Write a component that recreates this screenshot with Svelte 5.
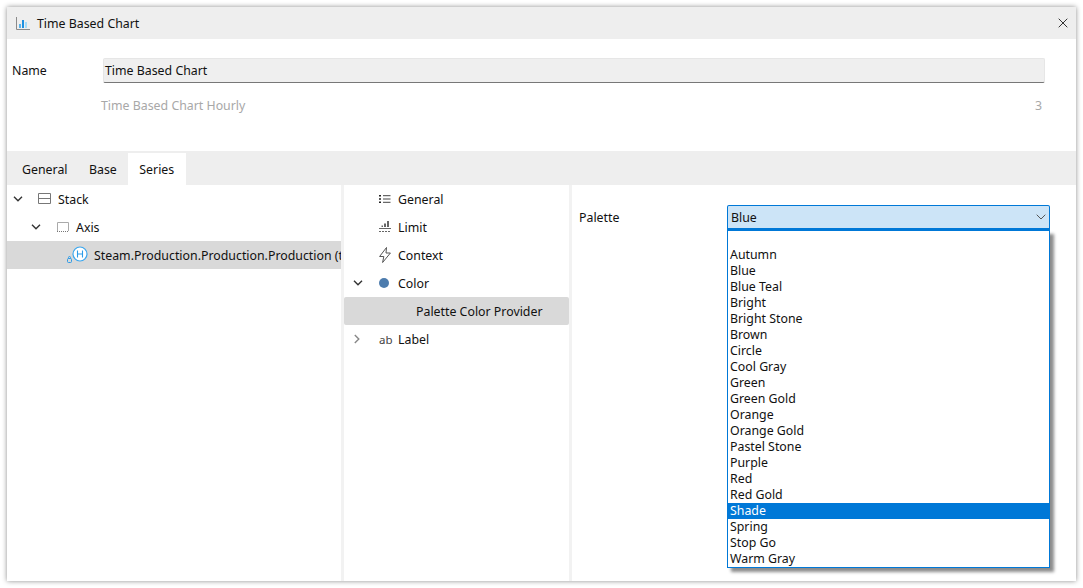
<script lang="ts">
  const palettes = ['Autumn', 'Blue', 'Blue Teal', 'Bright', 'Bright Stone', 'Brown', 'Circle', 'Cool Gray', 'Green', 'Green Gold', 'Orange', 'Orange Gold', 'Pastel Stone', 'Purple', 'Red', 'Red Gold', 'Shade', 'Spring', 'Stop Go', 'Warm Gray']
  const highlighted = 'Shade'
</script>

<div class="window">
  <header class="titlebar">
    <svg class="chart-icon" width="14" height="14" viewBox="0 0 14 14">
      <path d="M.5 1v12.5H14" fill="none" stroke="#8a8a8a" />
      <rect x="3" y="8" width="2" height="4" fill="#5ab4ea" />
      <rect x="6" y="4" width="2" height="8" fill="#1e90e0" />
      <rect x="9" y="6" width="2" height="6" fill="#a6dcf8" />
    </svg>
    <span class="title">Time Based Chart</span>
    <svg class="close" width="10" height="10" viewBox="0 0 10 10">
      <path d="M.7.7l8.6 8.6M9.3.7L.7 9.3" stroke="#333" fill="none" />
    </svg>
  </header>

  <section class="meta">
    <div class="name-row">
      <span class="name-label">Name</span>
      <div class="name-input">Time Based Chart</div>
    </div>
    <div class="hint-row">
      <span>Time Based Chart Hourly</span>
      <span>3</span>
    </div>
  </section>

  <nav class="tabs">
    <div class="tab">General</div>
    <div class="tab">Base</div>
    <div class="tab active">Series</div>
  </nav>

  <div class="panels">
    <div class="tree">
      <div class="row">
        <svg class="chev" width="10" height="6" viewBox="0 0 10 6"><path d="M1 .8l4 4 4-4" fill="none" stroke="#333" stroke-width="1.4" /></svg>
        <svg class="stack-icon" width="14" height="12" viewBox="0 0 14 12"><path d="M.5.5h12v10H.5zM.5 5.5h12" fill="none" stroke="#777" /></svg>
        <span>Stack</span>
      </div>
      <div class="row axis">
        <svg class="chev" width="10" height="6" viewBox="0 0 10 6"><path d="M1 .8l4 4 4-4" fill="none" stroke="#333" stroke-width="1.4" /></svg>
        <svg class="axis-icon" width="12" height="10" viewBox="0 0 12 10"><path d="M.5 9V.5h11V9" fill="none" stroke="#aaa" /><path d="M0 9.500h12" fill="none" stroke="#777" stroke-dasharray="1 1" /></svg>
        <span>Axis</span>
      </div>
      <div class="row selected series">
        <svg width="26" height="18" viewBox="0 0 26 18">
          <rect x="1.500" y="12.500" width="4" height="4" rx="1" fill="none" stroke="#2c9be8" />
          <path d="M2.500 12.500v-1a1 1 0 0 1 2 0v1" fill="none" stroke="#2c9be8" />
          <circle cx="14" cy="8" r="7" fill="#fff" stroke="#3aa6ee" stroke-width="1.2" />
          <path d="M11.500 4.500v7M16.500 4.500v7M11.500 8h5" fill="none" stroke="#2c9be8" stroke-width="1.100" />
        </svg>
        <span class="clip">Steam.Production.Production.Production (t</span>
      </div>
    </div>

    <div class="props">
      <div class="row">
        <span class="slot"></span>
        <svg class="prop-icon" width="12" height="10" viewBox="0 0 12 10"><path d="M0 1h2v1.500H0zM0 4.300h2v1.500H0zM0 7.500h2V9H0z" fill="#222" /><path d="M4 1.700h7.500M4 5h7.500M4 8.300h7.500" stroke="#444" fill="none" /></svg>
        <span>General</span>
      </div>
      <div class="row">
        <span class="slot"></span>
        <svg class="prop-icon" width="12" height="12" viewBox="0 0 12 12"><path d="M8 0h2v6H8zM5 2.500h2V6H5zM2.500 4.500h1.500V6H2.500z" fill="#666" /><path d="M0 7.500h12" stroke="#666" fill="none" /><path d="M0 10.500h12" stroke="#666" stroke-dasharray="2 1" fill="none" /></svg>
        <span>Limit</span>
      </div>
      <div class="row">
        <span class="slot"></span>
        <svg class="prop-icon" width="12" height="16" viewBox="0 0 12 16"><path d="M7.500.5L.6 9.500h4.200L3.600 15.500l7.800-9.500H7z" fill="none" stroke="#555" stroke-linejoin="round" /></svg>
        <span>Context</span>
      </div>
      <div class="row">
        <svg class="chev color-chev" width="10" height="6" viewBox="0 0 10 6"><path d="M1 .8l4 4 4-4" fill="none" stroke="#333" stroke-width="1.4" /></svg>
        <span class="dot"></span>
        <span>Color</span>
      </div>
      <div class="row selected provider">Palette Color Provider</div>
      <div class="row">
        <svg class="chev side" width="6" height="10" viewBox="0 0 6 10"><path d="M.8 1l4 4-4 4" fill="none" stroke="#888" stroke-width="1.4" /></svg>
        <span class="ab">ab</span>
        <span>Label</span>
      </div>
    </div>

    <div class="editor">
      <span class="palette-label">Palette</span>
      <div class="combo-wrap">
        <div class="combo">
          <span>Blue</span>
          <svg width="10" height="6" viewBox="0 0 10 6"><path d="M.7.7L5 5 9.300.7" fill="none" stroke="#555" /></svg>
        </div>
        <ul class="dropdown">
          <li class="blank"></li>
          {#each palettes as p}
            <li class:hl={p === highlighted}>{p}</li>
          {/each}
        </ul>
      </div>
    </div>
  </div>
</div>

<style>
  :global(body) {
    margin: 0;
    background: #fff;
    font-family: "Noto Sans", "Open Sans", sans-serif;
    font-size: 12.35px;
    color: #111;
  }
  .window {
    width: 1069px;
    height: 574px;
    margin: 7px;
    display: flex;
    flex-direction: column;
    background: #fff;
    box-shadow: 0 0 5px rgba(0, 0, 0, 0.45);
  }
  .titlebar {
    flex: 0 0 32px;
    display: flex;
    align-items: center;
    padding: 0 8px 0 9px;
    background: #eee;
  }
  .title { margin-left: 7px; flex: 1; }
  .meta { flex: 0 0 112px; padding: 19px 31px 0 5px; box-sizing: border-box; }
  .name-row { display: flex; align-items: center; }
  .name-label { width: 91px; }
  .name-input {
    flex: 1;
    height: 25px;
    padding-left: 1px;
    line-height: 24px;
    box-sizing: border-box;
    background: #efefef;
    border: 1px solid #e6e6e6;
    border-bottom: 1px solid #777;
    border-radius: 2px;
  }
  .hint-row {
    display: flex;
    justify-content: space-between;
    margin: 14px 3px 0 89px;
    color: #a8a8a8;
  }
  .tabs { flex: 0 0 34px; display: flex; background: #eee; padding-left: 5px; }
  .tab { padding: 3px 10px 0; line-height: 31px; margin-right: 1.5px; }
  .tab.active { background: #fff; margin: 2px 0 0; padding: 1px 11.5px 0 11px; }
  .panels { flex: 1; display: flex; gap: 3px; background: #f2f2f2; min-height: 0; }
  .tree { width: 334px; background: #fff; }
  .props { width: 225px; background: #fff; }
  .editor {
    flex: 1;
    background: #fff;
    display: flex;
    align-items: flex-start;
    padding: 20px 26px 0 7px;
  }
  .row {
    height: 28px;
    display: flex;
    align-items: center;
    white-space: nowrap;
    overflow: hidden;
  }
  .tree .row { padding-left: 6px; }
  .tree .axis { padding-left: 24px; }
  .tree .series { padding-left: 59px; }
  .chev { flex: none; }
  .stack-icon { margin: 0 6px 0 15px; }
  .axis-icon { margin: 0 7px 0 16px; }
  .series svg { margin-right: 2px; flex: none; }
  .clip { overflow: hidden; }
  .selected { background: #d9d9d9; }
  .props .row { padding-left: 10px; }
  .slot { width: 10px; flex: none; }
  .prop-icon { margin: 0 7px 0 15px; flex: none; }
  .color-chev { margin: 0 1px 0 -1px; }
  .dot {
    width: 10px;
    height: 10px;
    margin: 0 9px 0 15px;
    border-radius: 50%;
    background: #4d7cad;
    flex: none;
  }
  .side { margin-right: 4px; }
  .ab { width: 12px; margin: 0 7px 0 15px; font-size: 11.5px; color: #444; }
  .props .provider { padding-left: 72px; border-radius: 2px; }
  .palette-label { width: 148px; line-height: 25px; }
  .combo-wrap { position: relative; flex: 1; }
  .combo {
    height: 25px;
    box-sizing: border-box;
    display: flex;
    align-items: center;
    justify-content: space-between;
    padding: 0 3px 0 3px;
    background: #cce4f7;
    border: 1px solid #0078d7;
    border-bottom-width: 2px;
    border-radius: 2px 2px 0 0;
  }
  .dropdown {
    position: absolute;
    left: 0;
    right: 0;
    top: 25px;
    margin: 0;
    padding: 0;
    list-style: none;
    background: #fff;
    border: 1px solid #0078d7;
    box-shadow: 4px 4px 3px rgba(0, 0, 0, 0.45);
  }
  .dropdown li { height: 16px; line-height: 16px; padding-left: 2px; }
  .dropdown .hl { background: #0078d7; color: #fff; }
</style>
